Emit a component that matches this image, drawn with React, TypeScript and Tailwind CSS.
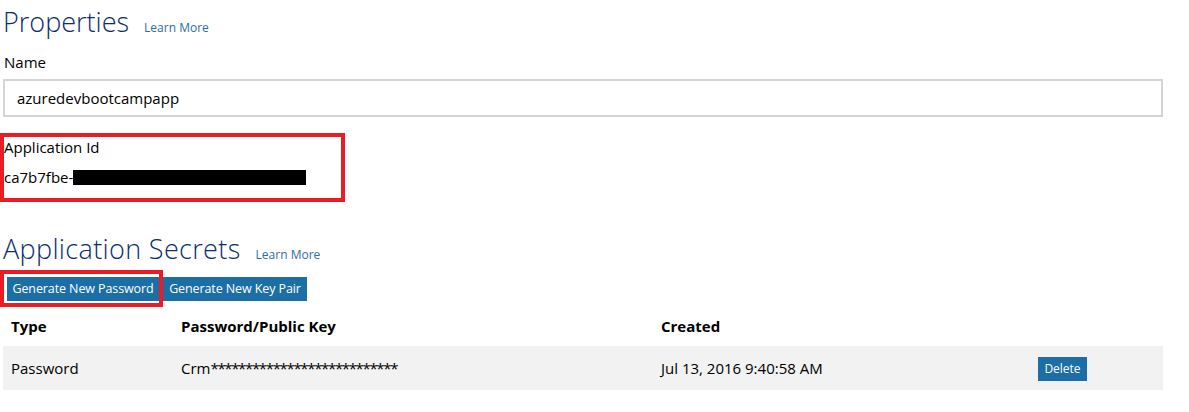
const font = "font-['Segoe_UI','Open_Sans','Noto_Sans',sans-serif]";

function LearnMore() {
  return <a className="ml-[15px] text-[12px] text-[#2b6ead]">Learn More</a>;
}

function Button({ children, className = "" }: { children: string; className?: string }) {
  return (
    <button
      className={`h-[24px] bg-[#1b6ea6] px-0 whitespace-nowrap text-[12.5px] leading-[24px] text-white ${className}`}
    >
      {children}
    </button>
  );
}

export default function App() {
  return (
    <div className={`${font} w-[1189px] h-[412px] bg-white text-black`}>
      <div className="w-[1163px] pl-[3px]">
        <div className="flex items-baseline h-[46px] pt-[2px]">
          <h1 className="text-[27px] font-light leading-[40px] text-[#0b2e6b]">Properties</h1>
          <LearnMore />
        </div>
        <div className="text-[15px] leading-[22px] mt-[5px] pl-[1px]">Name</div>
        <div className="mt-[6px] h-[38px] border-2 border-[#d4d4d4] flex items-center pl-[12px] text-[15px]">
          azuredevbootcampapp
        </div>
        <div className="-ml-[3px] mt-[16px] h-[69px] w-[345px] border-4 border-[#ec1c24]">
          <div className="text-[15px] leading-[20px]">Application Id</div>
          <div className="flex items-center mt-[10px] text-[15px] leading-[20px]">
            <span>ca7b7fbe-</span>
            <span className="inline-block h-[15px] w-[233px] bg-black" />
          </div>
        </div>
        <div className="flex items-baseline mt-[27px] h-[41px]">
          <h2 className="text-[27px] font-light leading-[40px] tracking-[0.35px] text-[#0b2e6b]">
            Application Secrets
          </h2>
          <LearnMore />
        </div>
        <div className="flex items-center -ml-[3px] h-[37px]">
          <div className="h-[37px] w-[163px] border-4 border-[#ec1c24] flex items-center pl-[3px]">
            <Button className="w-[152px] tracking-[-0.1px]">Generate New Password</Button>
          </div>
          <Button className="w-[144px] tracking-[-0.1px]">Generate New Key Pair</Button>
        </div>
        <table className="w-full text-left text-[15px]">
          <thead>
            <tr className="h-[39px]">
              <th className="pl-[8px] w-[178px] font-bold">Type</th>
              <th className="w-[480px] font-bold">Password/Public Key</th>
              <th className="w-[377px] font-bold">Created</th>
              <th />
            </tr>
          </thead>
          <tbody>
            <tr className="h-[44px] bg-[#f2f2f2]">
              <td className="pl-[8px]">Password</td>
              <td>
                Crm<span className="tracking-[-1.35px]">***************************</span>
              </td>
              <td>Jul 13, 2016 9:40:58 AM</td>
              <td>
                <Button className="h-[24px] w-[49px] text-[12px] tracking-normal">Delete</Button>
              </td>
            </tr>
          </tbody>
        </table>
      </div>
    </div>
  );
}
